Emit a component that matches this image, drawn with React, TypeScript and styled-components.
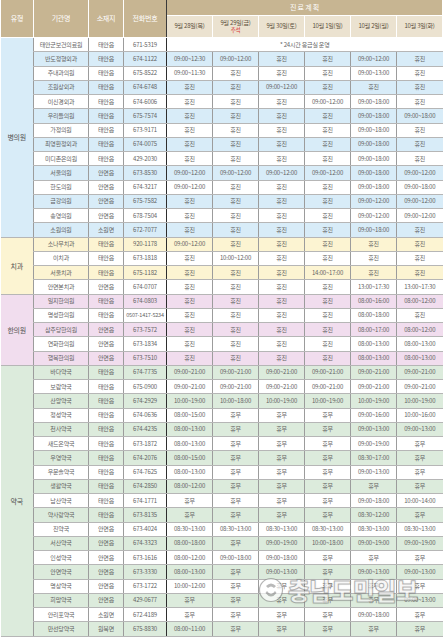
import React from 'react';
import styled, { createGlobalStyle } from 'styled-components';

const GlobalStyle = createGlobalStyle`
  html, body { margin: 0; padding: 0; background: #fff; }
  body { font-family: "Noto Sans CJK KR", "Noto Sans", sans-serif; }
`;

const Page = styled.div`
  position: relative;
  width: 443px;
  height: 637px;
  overflow: hidden;
  background: #fff;
`;

const Table = styled.table`
  width: 443px;
  table-layout: fixed;
  border-collapse: collapse;
  font-size: 6px;
  color: #646464;
  letter-spacing: -0.2px;
`;

const HeadCell = styled.th<{ $light?: boolean; $h: number }>`
  height: ${p => p.$h}px;
  padding: 0;
  font-weight: 400;
  font-size: ${p => (p.$light ? 6 : 7)}px;
  line-height: 1.1;
  color: ${p => (p.$light ? '#5a4e3a' : '#fff')};
  background: ${p => (p.$light ? '#ebe2d0' : '#c7b592')};
  border: 1px solid #fff;
  border-top: none;
  white-space: nowrap;
  &.split { border-right: 1px solid #3a3a3a; }
`;

const Red = styled.span`
  display: block;
  color: #d8322e;
  font-size: 5.5px;
`;

const Row = styled.tr<{ $bg: string }>`
  height: 14.26px;
  background: ${p => p.$bg};
`;

const Cell = styled.td`
  padding: 0;
  text-align: center;
  white-space: nowrap;
  overflow: hidden;
  line-height: 1;
  border-left: 1px solid #9c9c9c;
  border-bottom: 1px solid #b6b6b6;
  &.split { border-right: 1px solid #2e2e2e; }
  &.wrap { white-space: normal; font-size: 5.5px; line-height: 0.95; }
`;

const GroupCell = styled.td<{ $bg: string }>`
  padding: 0;
  text-align: center;
  font-size: 7px;
  color: #555;
  background: ${p => p.$bg};
  border-bottom: 1px solid #b6b6b6;
`;

const Watermark = styled.div`
  position: absolute;
  left: 258px;
  top: 572px;
  display: flex;
  align-items: center;
  gap: 4px;
  opacity: 0.8;
  pointer-events: none;
`;

const MarkText = styled.span`
  font-family: "Noto Sans CJK KR", sans-serif;
  font-weight: 900;
  font-size: 24px;
  letter-spacing: -0.5px;
  color: rgba(255, 255, 255, 0.85);
  -webkit-text-stroke: 1px rgba(90, 90, 90, 0.55);
  text-shadow: 0 0 2px rgba(0, 0, 0, 0.25);
`;

type Item = [string, string, string, string[] | string];

interface Group {
  name: string;
  tint: string;
  tintFirst: boolean;
  rows: Item[];
}

const H = '휴진';
const M = '휴무';

const groups: Group[] = [
  {
    name: '병의원',
    tint: '#d8ecf8',
    tintFirst: false,
    rows: [
      ['태안군보건의료원', '태안읍', '671-5319', '* 24시간 응급실 운영'],
      ['반도정형외과', '태안읍', '674-1122', ['09:00~12:30', '09:00~12:00', H, H, '09:00~12:00', H]],
      ['주내과의원', '태안읍', '675-8522', ['09:00~11:30', H, H, H, '09:00~13:00', H]],
      ['조원상외과', '태안읍', '674-6748', [H, H, '09:00~12:00', H, H, H]],
      ['이신경외과', '태안읍', '674-6006', [H, H, H, '09:00~12:00', '09:00~18:00', H]],
      ['우리들의원', '태안읍', '675-7574', [H, H, H, H, '09:00~18:00', '09:00~18:00']],
      ['가정의원', '태안읍', '673-9171', [H, H, H, H, '09:00~18:00', H]],
      ['최영환정외과', '태안읍', '674-0075', [H, H, H, H, '09:00~18:00', H]],
      ['미디존은의원', '태안읍', '429-2030', [H, H, H, H, '09:00~18:00', H]],
      ['서울의원', '안면읍', '673-8530', ['09:00~12:00', '09:00~12:00', '09:00~12:00', '09:00~12:00', '09:00~18:00', '09:00~12:00']],
      ['한도의원', '안면읍', '674-3217', ['09:00~12:00', H, H, H, '09:00~18:00', '09:00~18:00']],
      ['금강의원', '안면읍', '675-7582', [H, H, H, H, '09:00~12:00', '09:00~12:00']],
      ['송영의원', '안면읍', '678-7504', [H, H, H, H, '09:00~12:00', '09:00~12:00']],
      ['소원의원', '소원면', '672-7077', [H, H, H, H, '09:00~18:00', H]],
    ],
  },
  {
    name: '치과',
    tint: '#fcf4d2',
    tintFirst: true,
    rows: [
      ['소나무치과', '태안읍', '920-1178', ['09:00~12:00', H, H, H, H, H]],
      ['이치과', '태안읍', '673-1818', [H, '10:00~12:00', H, H, H, H]],
      ['서울치과', '태안읍', '675-1182', [H, H, H, '14:00~17:00', H, H]],
      ['안면본치과', '안면읍', '674-0707', [H, H, H, H, '13:00~17:30', '13:00~17:30']],
    ],
  },
  {
    name: '한의원',
    tint: '#f1ddee',
    tintFirst: true,
    rows: [
      ['일지한의원', '태안읍', '674-0803', [H, H, H, H, '08:00~16:00', '08:00~12:00']],
      ['명성한의원', '태안읍', '0507-1417-5234', [H, H, H, H, '08:00~18:00', H]],
      ['삼주당한의원', '안면읍', '673-7572', [H, H, H, H, '08:00~17:00', '08:00~12:00']],
      ['연화한의원', '안면읍', '673-1834', [H, H, H, H, '08:00~13:00', '08:00~13:00']],
      ['행복한의원', '안면읍', '673-7510', [H, H, H, H, '08:00~13:00', '08:00~13:00']],
    ],
  },
  {
    name: '약국',
    tint: '#dcebdc',
    tintFirst: true,
    rows: [
      ['바다약국', '태안읍', '674-7735', ['09:00~21:00', '09:00~21:00', '09:00~21:00', '09:00~21:00', '09:00~21:00', '09:00~21:00']],
      ['보람약국', '태안읍', '675-0900', ['09:00~21:00', '09:00~21:00', '09:00~21:00', '09:00~21:00', '09:00~21:00', '09:00~21:00']],
      ['산앙약국', '태안읍', '674-2929', ['10:00~19:00', '10:00~18:00', '10:00~19:00', '10:00~19:00', '10:00~19:00', '10:00~19:00']],
      ['정성약국', '태안읍', '674-0636', ['08:00~15:00', M, M, M, '09:00~16:00', '10:00~16:00']],
      ['천사약국', '태안읍', '674-4235', ['08:00~13:00', M, M, M, '09:00~13:00', '09:00~13:00']],
      ['새드온약국', '태안읍', '673-1872', ['08:00~13:00', M, M, M, '09:00~19:00', M]],
      ['우영약국', '태안읍', '674-2076', ['08:00~15:00', M, M, M, '08:30~17:00', M]],
      ['우문솔약국', '태안읍', '674-7625', ['08:00~13:00', M, M, M, '09:00~13:00', M]],
      ['생활약국', '태안읍', '674-2850', ['08:00~12:00', M, M, M, M, M]],
      ['남산약국', '태안읍', '674-1771', [M, M, M, M, '09:00~18:00', '10:00~14:00']],
      ['약사랑약국', '태안읍', '673-8135', [M, M, M, M, '08:30~12:00', M]],
      ['진약국', '안면읍', '673-4024', ['08:30~13:00', '08:30~13:00', '08:30~13:00', '08:30~13:00', '08:30~13:00', '08:30~13:00']],
      ['서산약국', '안면읍', '674-3323', ['08:00~18:00', M, '09:00~19:00', '10:00~18:00', '09:00~19:00', '09:00~19:00']],
      ['인성약국', '안면읍', '673-1616', ['08:00~12:00', '09:00~18:00', '09:00~18:00', M, M, M]],
      ['안면약국', '안면읍', '673-3330', ['08:00~13:00', M, '09:00~13:00', M, '09:00~13:00', '09:00~13:00']],
      ['명상약국', '안면읍', '673-1722', ['10:00~12:00', M, M, M, M, M]],
      ['희망약국', '안면읍', '429-0677', [M, M, M, M, M, '09:00~13:00']],
      ['안리포약국', '소원면', '672-4189', [M, M, M, M, '09:00~18:00', M]],
      ['만선당약국', '원북면', '675-8830', ['08:00~11:00', M, M, M, M, M]],
    ],
  },
];

const days = ['9월 28일(목)', '9월 29일(금)', '9월 30일(토)', '10월 1일(일)', '10월 2일(월)', '10월 3일(화)'];

const Logo = () => (
  <svg width="26" height="26" viewBox="0 0 26 26">
    <circle cx="13" cy="13" r="11.5" fill="rgba(255,255,255,0.85)" stroke="rgba(90,90,90,0.55)" strokeWidth="1.2" />
    <path d="M8 9 Q13 4 18 9 L16 11 Q13 8 10 11 Z" fill="rgba(110,110,110,0.6)" />
    <path d="M9 14 Q13 20 17 14 L18.5 16 Q13 23 7.5 16 Z" fill="rgba(110,110,110,0.6)" />
  </svg>
);

export default function App() {
  return (
    <Page>
      <GlobalStyle />
      <Table>
        <colgroup>
          <col style={{ width: 33 }} />
          <col style={{ width: 55 }} />
          <col style={{ width: 35 }} />
          <col style={{ width: 43 }} />
          {days.map(d => <col key={d} />)}
        </colgroup>
        <thead>
          <tr>
            <HeadCell $h={15} rowSpan={2}>유형</HeadCell>
            <HeadCell $h={15} rowSpan={2}>기관명</HeadCell>
            <HeadCell $h={15} rowSpan={2}>소재지</HeadCell>
            <HeadCell $h={15} rowSpan={2} className="split">전화번호</HeadCell>
            <HeadCell $h={15} colSpan={6}>진 료 계 획</HeadCell>
          </tr>
          <tr>
            {days.map((d, i) => (
              <HeadCell key={d} $h={21} $light>
                {d}
                {i === 1 && <Red>추석</Red>}
              </HeadCell>
            ))}
          </tr>
        </thead>
        <tbody>
          {groups.map(g =>
            g.rows.map((r, i) => {
              const tinted = g.tintFirst ? i % 2 === 0 : i % 2 === 1;
              const [name, loc, phone, hours] = r;
              return (
                <Row key={name} $bg={tinted ? g.tint : '#fff'}>
                  {i === 0 && (
                    <GroupCell rowSpan={g.rows.length} $bg={g.tint}>
                      {g.name}
                    </GroupCell>
                  )}
                  <Cell>{name}</Cell>
                  <Cell>{loc}</Cell>
                  <Cell className={phone.length > 9 ? 'split wrap' : 'split'}>{phone}</Cell>
                  {typeof hours === 'string' ? (
                    <Cell colSpan={6} style={{ background: '#fff' }}>{hours}</Cell>
                  ) : (
                    hours.map((h, k) => <Cell key={k}>{h}</Cell>)
                  )}
                </Row>
              );
            })
          )}
        </tbody>
      </Table>
      <Watermark>
        <Logo />
        <MarkText>충남도민일보</MarkText>
      </Watermark>
    </Page>
  );
}
